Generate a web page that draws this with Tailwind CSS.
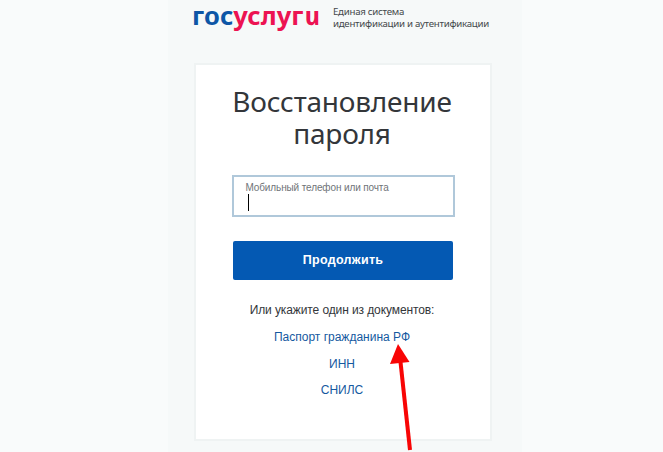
<!DOCTYPE html>
<html lang="ru">
<head>
    <meta charset="UTF-8">
    <meta name="viewport" content="width=device-width, initial-scale=1.0">
    <title>Восстановление пароля</title>
    <script src="https://cdn.jsdelivr.net/npm/@tailwindcss/browser@4"></script>
</head>
<body class="bg-[#f9fbfb] h-[452px] overflow-hidden font-['Liberation_Sans',sans-serif] text-[#33363a]">

    <div class="relative ml-[168px] w-[354px] h-[452px] bg-[#f6f9f9] pl-[26px]">

        <header class="h-[63px] flex items-start whitespace-nowrap">
            <div class="w-[139px] shrink-0 font-['Noto_Sans',sans-serif] font-bold text-[25.5px] leading-[32px] -mt-[1px] -ml-[2px] mr-[2px] tracking-[0.1px]">
                <span class="text-[#0d56a6]">гос</span><span class="text-[#ec1352]">услуг<span class="inline-block italic skew-x-12">и</span></span>
            </div>
            <div class="font-['Noto_Sans',sans-serif] text-[9.7px] leading-[12px] mt-[6px] tracking-[-0.27px] text-[#44484b]">
                <p>Единая система</p>
                <p>идентификации и аутентификации</p>
            </div>
        </header>

        <main class="w-[298px] h-[378px] bg-white border-2 border-[#eff3f3] pl-[35px] pr-[37px] pt-[20px] text-center">
            <h1 class="font-['Noto_Sans',sans-serif] text-[28px] leading-[32px] tracking-[-0.2px] -mx-4 whitespace-nowrap">Восстановление<br>пароля</h1>

            <div class="mt-[26px] ml-[0.5px] w-[223px] h-[42px] border-2 border-[#b0c8da] bg-white pl-[12px] pt-[5px] text-left">
                <p class="text-[10px] leading-[12px] tracking-[-0.12px] text-[#707478] whitespace-nowrap">Мобильный телефон или почта</p>
                <div class="w-px h-[17px] ml-[2px] bg-black"></div>
            </div>

            <button class="block mt-[24px] w-[220px] h-[39px] ml-[2px] rounded-[2px] bg-[#0459b3] text-white text-[12.5px] font-bold tracking-[0.3px]">Продолжить</button>

            <p class="mt-[22px] text-[12px] leading-[16px] tracking-[-0.1px] whitespace-nowrap">Или укажите один из документов:</p>
            <nav class="mt-[11px] flex flex-col items-center gap-[10.5px] text-[12px] leading-[16px] text-[#1559a0] whitespace-nowrap">
                <a href="#">Паспорт гражданина РФ</a>
                <a href="#">ИНН</a>
                <a href="#">СНИЛС</a>
            </nav>
        </main>

        <!-- pointer to the passport link -->
        <svg class="absolute left-[218px] top-[340px]" width="32" height="112" viewBox="0 0 32 112">
            <path d="M14.5 22 24 110" stroke="#f80505" stroke-width="4" fill="none"/>
            <path d="M12 4 23.5 22 4 24Z" fill="#f80505"/>
        </svg>
    </div>

</body>
</html>
